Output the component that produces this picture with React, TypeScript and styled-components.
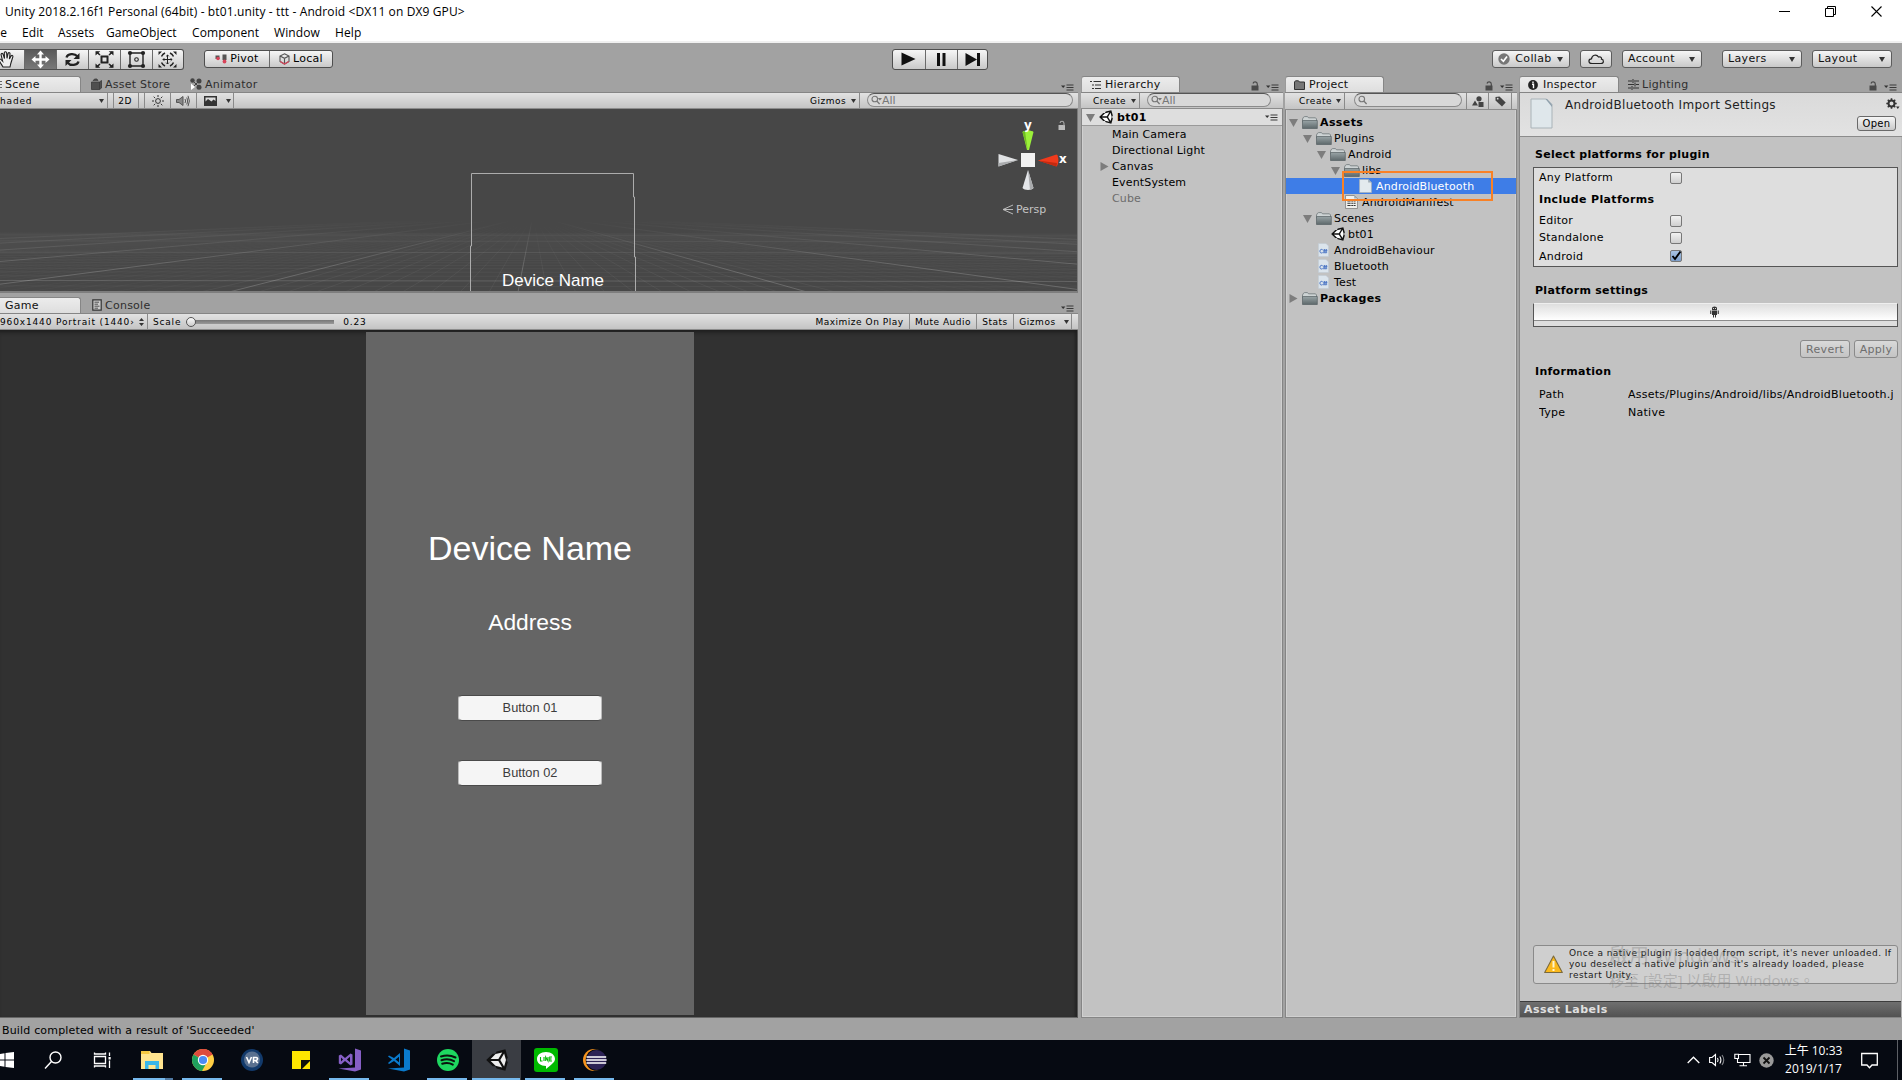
import React from "react";
import styled, { createGlobalStyle, css } from "styled-components";

const Global = createGlobalStyle`
  *{box-sizing:border-box}
  html,body{margin:0;padding:0;overflow:hidden;background:#a2a2a2}
  body{font-family:"DejaVu Sans","Noto Sans CJK TC",sans-serif;font-size:11px;color:#000}
  svg{display:block;flex:none}
`;

const Screen = styled.div`
  position: relative; width: 1902px; height: 1080px; overflow: hidden;
  display: flex; flex-direction: column; background: #a2a2a2;
`;
const winFont = css`font-family: "Open Sans", "Noto Sans CJK TC", sans-serif; font-size: 12px;`;

/* ---------- window chrome ---------- */
const TitleBar = styled.header`
  ${winFont} height: 24px; background: #fff; display: flex; align-items: center;
  padding: 0 20px 2px 5px; flex: none; letter-spacing: 0.12px; white-space: nowrap;
`;
const TitleText = styled.span`flex: 1;`;
const WindowButtons = styled.div`display: flex; gap: 35px; align-items: center;`;
const MenuBar = styled.nav`
  ${winFont} height: 19px; background: #fff; border-bottom: 2px solid #f0f0f0; display: flex;
  align-items: center; flex: none;
`;
const MenuItem = styled.span<{ $w: number }>`
  width: ${p => p.$w}px; flex: none; white-space: nowrap; line-height: 16px; letter-spacing: 0.1px;
`;
const MenuCut = styled(MenuItem)`display: flex; justify-content: flex-end; padding-right: 15px; overflow: hidden;`;

/* ---------- main toolbar ---------- */
const TopBar = styled.div`height: 33px; flex: none; display: flex; align-items: center; padding-bottom: 1px;`;
const btnFace = css`
  background: linear-gradient(#f6f6f6, #c9c9c9); border: 1px solid #4e4e4e; border-radius: 3px;
`;
const Group = styled.div<{ $h: number; $ml: number; $open?: boolean }>`
  ${btnFace} display: flex; height: ${p => p.$h}px; margin-left: ${p => p.$ml}px; overflow: hidden; flex: none;
  ${p => p.$open && "border-left:0;border-radius:0 3px 3px 0;"}
`;
const GroupButton = styled.button<{ $w: number; $on?: boolean; $pr?: number }>`
  all: unset; box-sizing: border-box; width: ${p => p.$w}px; display: flex; align-items: center; justify-content: center; gap: 3px;
  font-size: 11px; letter-spacing: 0.25px; line-height: 18px; padding-right: ${p => p.$pr ?? 0}px;
  background: ${p => (p.$on ? "linear-gradient(#5a5a5a,#787878)" : "transparent")};
  & + & { border-left: 1px solid #6a6a6a; }
`;
const Dropdown = styled.button<{ $w: number; $ml: number }>`
  ${btnFace} border-color: #5c5c5c; margin: 0 0 0 ${p => p.$ml}px; width: ${p => p.$w}px; height: 18px; padding: 0 6px 0 5px;
  font: 11px/16px "DejaVu Sans", sans-serif; letter-spacing: 0.35px; color: #111;
  display: flex; align-items: center; justify-content: space-between; flex: none;
`;

/* ---------- docks ---------- */
const Main = styled.main`height: 942px; flex: none; display: flex;`;
const Column = styled.section<{ $w: number; $ml?: number }>`
  width: ${p => p.$w}px; margin-left: ${p => p.$ml ?? 0}px; flex: none; display: flex; flex-direction: column;
`;
const TabStrip = styled.div<{ $mt?: number }>`
  height: 16px; margin-top: ${p => p.$mt ?? 0}px; display: flex; flex: none; align-items: stretch;
`;
const Tab = styled.div<{ $w: number; $on?: boolean; $pl?: number; $gap?: number }>`
  width: ${p => p.$w}px; padding-left: ${p => p.$pl ?? 9}px; display: flex; align-items: center; gap: ${p => p.$gap ?? 4}px;
  font-size: 11px; letter-spacing: 0.25px; white-space: nowrap; flex: none; color: ${p => (p.$on ? "#111" : "#2e2e2e")};
  ${p => p.$on && "background:linear-gradient(#ececec,#dedede);border:1px solid #868686;border-left-color:#9a9a9a;border-bottom:0;border-radius:3px 3px 0 0;"}
`;
const EdgeTab = styled(Tab)`border-left: 0; border-top-left-radius: 0;`;
const StripEnd = styled.div<{ $pr?: number }>`
  margin-left: auto; display: flex; align-items: flex-end; gap: 7px; padding: 0 ${p => p.$pr ?? 4}px 1px 0;
`;
const ToolStrip = styled.div<{ $pl?: number; $pr?: number; $h?: number }>`
  height: ${p => p.$h ?? 17}px; flex: none; display: flex; background: linear-gradient(#e2e2e2, #c4c4c4);
  border-top: 1px solid #858585; border-bottom: 1px solid #8c8c8c; padding: 0 ${p => p.$pr ?? 0}px 0 ${p => p.$pl ?? 0}px;
  font-size: 9px; letter-spacing: 0.52px; align-items: stretch; overflow: hidden;
`;
const ToolCell = styled.div<{ $w: number; $pl?: number; $nb?: boolean; $pr?: number }>`
  width: ${p => p.$w}px; flex: none; padding: 0 ${p => p.$pr ?? 3}px 0 ${p => p.$pl ?? 0}px; display: flex; align-items: center; justify-content: space-between;
  white-space: nowrap; overflow: hidden; ${p => !p.$nb && "border-right:1px solid #8a8a8a;"}
`;
const WideCell = styled(ToolCell)`letter-spacing: 0.85px;`;
const ScaleCell = styled(ToolCell)`letter-spacing: 0.8px; justify-content: flex-start;`;
const Centered = styled(ToolCell)`justify-content: center; padding: 0 ${p => p.$pr ?? 0}px 0 0;`;
const Spacer = styled.div`flex: 1;`;
const Search = styled.div<{ $w: number; $ml: number }>`
  width: ${p => p.$w}px; margin: 0 0 0 ${p => p.$ml}px; height: 14px; flex: none; border-radius: 7px;
  border: 1px solid #8b8b8b; border-top-color: #555; background: #d8d8d8; display: flex; align-items: center; padding-left: 3px; gap: 0;
  color: #777; font-size: 11px; line-height: 11px; letter-spacing: 0;
`;
const ScaleRail = styled.div`
  width: 150px; height: 9px; display: flex; align-items: center; margin: 0 7px 0 5px; flex: none;
  background: linear-gradient(#777, #999) center / 146px 4px no-repeat;
`;
const Knob = styled.i`width: 10px; height: 10px; flex: none; border-radius: 5px; border: 1px solid #555; background: linear-gradient(#fafafa, #ccc);`;

const SceneView = styled.div`
  position: relative; height: 184px; flex: none; background: #474747; border-right: 1px solid #7b7b7b; border-bottom: 2px solid #7e7e7e; overflow: hidden;
`;
const SceneSvg = styled.svg`position: absolute; left: 0; top: 0;`;
const Float = styled.span<{ $x: number; $y: number; $s: number; $c: string; $f?: string; $b?: boolean }>`
  position: absolute; left: ${p => p.$x}px; top: ${p => p.$y}px; font-size: ${p => p.$s}px; line-height: 1; color: ${p => p.$c};
  font-family: ${p => p.$f ?? '"DejaVu Sans", sans-serif'}; font-weight: ${p => (p.$b ? 700 : 400)}; white-space: nowrap;
`;
const GameView = styled.div`
  height: 688px; flex: none; background: #313131; box-shadow: inset 0 5px 4px -3px #1c1c1c, inset -3px 0 3px -1px #242424;
  border-right: 1px solid #555; border-bottom: 1px solid #666; padding: 2px 0 0 366px;
`;
const GameScreen = styled.div`
  width: 328px; height: 683px; background: #656565; display: flex; flex-direction: column; align-items: center;
  font-family: "Liberation Sans", Arial, sans-serif; color: #fff;
`;
const GameText = styled.div<{ $s: number; $mt: number }>`
  font-size: ${p => p.$s}px; line-height: 40px; margin-top: ${p => p.$mt}px; height: 40px; white-space: nowrap;
`;
const GameButton = styled.button<{ $mt: number }>`
  margin: ${p => p.$mt}px 0 0; width: 144px; height: 26px; border: 1px solid #bbb; border-top-color: #4a4a4a; border-bottom-color: #4a4a4a;
  border-radius: 4px; background: #f5f5f5; color: #3c3c3c; font: 12.8px/22px "Liberation Sans", Arial, sans-serif; padding: 0;
`;
const PanelBody = styled.div`
  flex: 1; min-height: 0; background: #c2c2c2; border: 1px solid #858585; border-top: 0;
  box-shadow: inset -1px -1px 0 #d0d0d0, inset 1px 0 0 #d0d0d0; display: flex; flex-direction: column;
`;

/* ---------- trees ---------- */
const SceneRow = styled.div`
  height: 17px; flex: none; background: #dedede; border-bottom: 1px solid #9a9a9a; display: flex; align-items: center; padding: 0 4px; gap: 4px;
  font-weight: 700; font-size: 11px; letter-spacing: 0.35px;
`;
const Row = styled.div<{ $pl: number; $sel?: boolean; $bold?: boolean; $dim?: boolean }>`
  height: 16px; flex: none; display: flex; align-items: center; padding-left: ${p => p.$pl}px; white-space: nowrap;
  background: ${p => (p.$sel ? "#3e7de7" : "transparent")}; color: ${p => (p.$sel ? "#fff" : p.$dim ? "#6c6c6c" : "#000")};
  font-weight: ${p => (p.$bold ? 700 : 400)}; font-size: 11px; letter-spacing: ${p => (p.$bold ? 0.4 : 0.15)}px;
`;
const Label = styled.span`padding-top: 1px; line-height: 15px;`;
const IconSlot = styled.span<{ $w: number }>`width: ${p => p.$w}px; flex: none; display: flex; align-items: center; justify-content: flex-start;`;
const Tree = styled.div`display: flex; flex-direction: column; padding-top: 4px;`;

/* ---------- inspector ---------- */
const InspHead = styled.div`
  height: 45px; flex: none; background: linear-gradient(#dadada, #e2e2e2); border-top: 1px solid #858585; border-bottom: 1px solid #8c8c8c;
  border-left: 1px solid #858585; display: flex; padding: 5px 2px 0 10px;
`;
const HeadTitle = styled.div`font-size: 12px; letter-spacing: 0.3px; color: #222; margin-left: 12px; line-height: 15px; flex: 1; white-space: nowrap;`;
const HeadTools = styled.div`display: flex; flex-direction: column; align-items: flex-end; justify-content: space-between; padding-bottom: 5px;`;
const SmallButton = styled.button<{ $w: number; $h: number; $off?: boolean; $mr?: number }>`
  ${btnFace} width: ${p => p.$w}px; height: ${p => p.$h}px; padding: 0; margin: 0 ${p => p.$mr ?? 0}px 0 0; font: ${p => (p.$off ? 11 : 10)}px/1 "DejaVu Sans", sans-serif; letter-spacing: 0.3px;
  border-color: ${p => (p.$off ? "#8a8a8a" : "#6a6a6a")}; color: ${p => (p.$off ? "#6e6e6e" : "#000")};
  ${p => p.$off && "background:linear-gradient(#d9d9d9,#c4c4c4);"}
`;
const InspBody = styled(PanelBody)`border-right: 1px solid #b2b2b2; box-shadow: none;`;
const Heading = styled.div<{ $mt: number }>`
  font-weight: 700; font-size: 11px; letter-spacing: 0.3px; line-height: 16px; height: 16px; margin: ${p => p.$mt}px 0 0 15px; white-space: nowrap; flex: none;
`;
const PlatformBox = styled.div`
  margin: 4px 3px 0 13px; height: 100px; flex: none; border: 1px solid #555; background: #dedede; padding: 1px 0 0 5px;
`;
const Field = styled.div<{ $h: number; $lw: number; $b?: boolean }>`
  height: ${p => p.$h}px; display: grid; grid-template-columns: ${p => p.$lw}px 1fr; align-items: center; white-space: nowrap;
  letter-spacing: ${p => (p.$b ? 0.35 : 0.26)}px; font-weight: ${p => (p.$b ? 700 : 400)};
`;
const Check = styled.i<{ $on?: boolean }>`
  width: 12px; height: 12px; border: 1px solid #777; border-radius: 2px; display: flex; align-items: center; justify-content: center;
  background: ${p => (p.$on ? "linear-gradient(#a9c3e2,#7e9fc9)" : "linear-gradient(#f2f2f2,#cfcfcf)")};
`;
const PlatformTab = styled.div`
  margin: 4px 3px 0 13px; height: 24px; flex: none; border: 1px solid #555; border-top-color: #eee; background: #dedede;
`;
const PlatformFace = styled.div`
  height: 17px; display: flex; align-items: center; justify-content: center; background: linear-gradient(#dedede, #fff); border-bottom: 1px solid #8c8c8c;
  padding-right: 2px;
`;
const Actions = styled.div`display: flex; justify-content: flex-end; gap: 4px; margin: 13px 3px 0 0;`;
const Info = styled.div`margin: 5px 8px 0 19px; overflow: hidden;`;
const Clip = styled.span`overflow: hidden; white-space: nowrap;`;
const Warning = styled.div`
  margin: auto 3px 17px 13px; height: 39px; flex: none; border: 1px solid #8a8a8a; border-radius: 3px; background: #cfcfcf;
  display: flex; align-items: center; padding-left: 10px; gap: 6px; font-size: 9px; line-height: 11px; letter-spacing: 0.45px; color: #1a1a1a; white-space: nowrap;
`;
const AssetLabels = styled.div`
  height: 16px; flex: none; background: linear-gradient(#6f6f6f, #525252); border-top: 1px solid #3c3c3c; color: #e0e0e0; font-weight: 700; font-size: 11px;
  line-height: 16px; padding-left: 4px; letter-spacing: 0.45px;
`;

/* ---------- status, taskbar ---------- */
const Status = styled.div`flex: 1; font-size: 11px; letter-spacing: 0.17px; padding: 6px 0 0 2px; line-height: 13px; white-space: nowrap;`;
const Taskbar = styled.footer`height: 40px; flex: none; background: #060a12; display: flex; color: #fff;`;
const Slot = styled.div<{ $w?: number; $on?: boolean; $run?: boolean; $split?: boolean }>`
  width: ${p => p.$w ?? 49}px; flex: none; display: flex; align-items: center; justify-content: center;
  background:
    ${p => (p.$split ? "linear-gradient(#507aa3,#507aa3) 39px 38px / 8px 2px no-repeat," : "")}
    ${p => (p.$run ? `linear-gradient(#76b9ed,#76b9ed) ${p.$on ? 0 : p.$split ? 7 : 4}px 38px / ${p.$on ? 48 : p.$split ? 32 : 40}px 2px no-repeat,` : "")}
    ${p => (p.$on ? "#3a3d43" : "transparent")};
`;
const Tray = styled.div`margin-left: auto; display: flex; align-items: center; padding-right: 4px;`;
const TraySlot = styled.div<{ $w: number }>`width: ${p => p.$w}px; flex: none; display: flex; justify-content: center;`;
const Clock = styled.div`
  font-family: "Open Sans", "Noto Sans CJK TC", sans-serif; font-size: 12px; line-height: 18px; width: 71px; text-align: center; white-space: nowrap;
`;
const DesktopEdge = styled.i`width: 1px; height: 40px; background: #5d6066; margin-left: 8px;`;
const Callout = styled.div`position: absolute; left: 1342px; top: 171px; width: 151px; height: 30px; border: 2px solid #f98125;`;

/* ---------- icons ---------- */
const Caret = ({ s = 5, c = "#333" }: { s?: number; c?: string }) => (
  <svg width={s} height={s - 1} viewBox="0 0 6 4" preserveAspectRatio="none"><path d="M0 0H6L3 4Z" fill={c} /></svg>
);
const PanelMenu = () => (
  <svg width="13" height="7" viewBox="0 0 13 7"><path d="M0 1.5H4.4L2.2 4Z" fill="#333" /><path d="M5.500 1H12.500M5.500 3.500H12.500M5.500 6H12.500" stroke="#3a3a3a" /></svg>
);
const Lock = () => (
  <svg width="8" height="10" viewBox="0 0 8 10"><path d="M.5 4.500H7.500V9.500H.5Z" fill="#4a4a4a" /><path d="M2 2.500C2.500.3 6.200.2 6.300 3V5" fill="none" stroke="#4a4a4a" strokeWidth="1.200" /></svg>
);
const Glass = ({ drop }: { drop?: boolean }) => (
  <svg width={drop ? 11 : 10} height="10" viewBox={drop ? "0 0 11 10" : "0 0 10 10"}>
    <circle cx="3.800" cy="4" r="2.800" fill="none" stroke="#777" strokeWidth="1.100" /><path d="M5.800 6L8.600 9" stroke="#777" strokeWidth="1.300" />
    {drop && <path d="M6.800 3H11L8.900 5.600Z" fill="#777" />}
  </svg>
);
const Fold = ({ open }: { open?: boolean }) => (
  <svg width="9" height="9" viewBox="0 0 9 9"><path d={open ? "M0 1H9L4.500 9Z" : "M.5 0L8.500 4.500L.5 9Z"} fill="#7d7d7d" /></svg>
);
const Folder = () => (
  <svg width="16" height="13" viewBox="0 0 16 13">
    <path d="M.5 3L1.500 1.200L2.500.6H5.500L6.500 1.800H13.500L14.500 3V6H.5Z" fill="#cdd3d4" stroke="#6d7678" strokeWidth=".8" />
    <path d="M.5 4.500H15.300V12.500H.5Z" fill="url(#fold)" stroke="#566063" strokeWidth=".7" />
  </svg>
);
const UnityMark = ({ s = 14, dark = "#111", light = "#fff" }: { s?: number; dark?: string; light?: string }) => (
  <svg width={s} height={s} viewBox="10 10 494 494">
    <path d="M498 206.400L445.300 14.700L248.200 66.100L219 116.100L159.800 115.700L15.500 256L159.800 396.300L219 395.900L248.200 445.900L445.300 497.300L498 305.600L468 256Z" fill={dark} />
    <path d="M223.800 124.200L374.500 86.500L288 232.300H114.900ZM223.800 387.800L374.500 425.500L288 279.700H114.900ZM330.300 256L416.800 110.200L458.300 256L416.800 401.800Z" fill={light} />
  </svg>
);
const Sheet = ({ lines, w = 12, h = 14 }: { lines?: boolean; w?: number; h?: number }) => (
  <svg width={w} height={h} viewBox="0 0 12 14" preserveAspectRatio="none">
    <path d="M.5.5H8.500L11.500 3.500V13.500H.5Z" fill={lines ? "#f1f1ee" : "#e3eaee"} stroke={lines ? "#777" : "#a8b2b8"} strokeWidth=".7" />
    <path d="M8.500.5V3.500H11.500Z" fill="#9fadb7" />
    {lines && <path d="M2.200 6H9.800M2.200 8.300H9.800M2.200 10.600H9.800" stroke="#333" strokeWidth="1" strokeDasharray="3 .6 1.6 .5" />}
  </svg>
);
const FileBig = () => (
  <svg width="23" height="31" viewBox="0 0 23 31">
    <path d="M1 1H16.500L22 6.500V30H1Z" fill="#dfe7eb" stroke="#a9b3b8" />
    <path d="M15.500 1H17L22 6.500V9Z" fill="#8fa0ac" />
  </svg>
);
const ScriptIcon = () => (
  <svg width="11" height="14" viewBox="0 0 11 14"><path d="M.4.4H8L10.600 3V13.600H.4Z" fill="#dbe4ec" stroke="#c0cad3" strokeWidth=".6" />
    <path d="M4.700 6.800C3.600 5.900 1.900 6.400 1.900 8.200S3.600 10.500 4.700 9.600M6.400 6L6 10.400M8.300 6L7.900 10.400M5.300 7.300H9.400M5.100 9.100H9.200" stroke="#4a74c4" strokeWidth="1" fill="none" /></svg>
);

const ToolIcon = ({ k }: { k: string }) => (
  <svg width="21" height="19" viewBox="0 0 21 19" fill="none" stroke="#222" strokeWidth="1.600">
    {k === "hand" && <path d="M5 17C3.500 14 1 11.500 .8 9.500C1.500 8.200 3 9.300 4.600 11L3 4.500C3.200 3 4.800 3 5.200 4.500L6.500 8.500L6.300 2.600C6.800 1.300 8.400 1.400 8.600 2.800L9 8.300L10.100 3.300C10.800 2 12.200 2.600 12 4L11.400 9L13.200 5.700C14.200 4.900 15.200 5.700 14.800 7L12.800 13.500L12 17Z" strokeWidth="1.100" fill="#eee" />}
    {k === "move" && <path d="M10.500 .5L14 4.500H11.700V8.300H15.500V6L19.500 9.500L15.500 13V10.700H11.700V14.500H14L10.500 18.500L7 14.500H9.300V10.700H5.500V13L1.500 9.500L5.500 6V8.300H9.300V4.500H7Z" fill="#fff" stroke="none" />}
    {k === "rotate" && <><path d="M4.500 7.500C5.500 3.500 12.500 2.800 15.300 6.300M16.500 11.500C15.500 15.500 8.500 16.200 5.700 12.700" strokeWidth="2.300" /><path d="M17.500 3V9H11.500ZM3.500 16V10H9.500Z" fill="#222" stroke="none" /></>}
    {k === "scale" && <><path d="M7.500 6.500H13.500V12.500H7.500Z" strokeWidth="2" /><path d="M6 5L2.500 1.900M15 5L18.500 1.900M6 14L2.500 17.100M15 14L18.500 17.100" /><path d="M1.500 1.300H6.300L1.500 5.500ZM19.500 1.300H14.700L19.500 5.500ZM1.500 17.700H6.300L1.500 13.500ZM19.500 17.700H14.700L19.500 13.500Z" fill="#222" stroke="none" /></>}
    {k === "rect" && <><path d="M4 3H17V16H4Z" strokeWidth="1.400" /><circle cx="10.500" cy="9.500" r="1.800" strokeWidth="1.100" />
      {[[4, 3], [17, 3], [4, 16], [17, 16]].map(([x, y]) => <circle key={`${x}-${y}`} cx={x} cy={y} r="2.100" fill="#222" stroke="none" />)}</>}
    {k === "multi" && <><path d="M4.500 6.500A7 7 0 0 1 8 3M13 3A7 7 0 0 1 16.500 6.500M16.500 12.500A7 7 0 0 1 13 16M8 16A7 7 0 0 1 4.500 12.500" strokeWidth="1.500" /><path d="M1.500 1.500H5L1.500 5ZM19.500 1.500H16L19.500 5ZM1.500 17.500H5L1.500 14ZM19.500 17.500H16L19.500 14Z" fill="#222" stroke="none" /><path d="M10.500 5V14M6 9.500H15M9.200 6.300L10.500 5L11.800 6.300M9.200 12.700L10.500 14L11.800 12.700M7.300 8.200L6 9.500L7.300 10.800M13.700 8.200L15 9.500L13.700 10.800" strokeWidth="1" /></>}
  </svg>
);

/* perspective floor: rays from the vanishing point plus rows at even depth */
const FloorGrid = () => {
  const rays = [];
  for (let i = -60; i <= 60; i++) {
    const x = 518 + i * 28.9;
    const major = i % 10 === 0;
    rays.push(<path key={i} d={`M533 106L${x} 183`} stroke="#fff" strokeOpacity={major ? 0.19 : Math.abs(i) < 12 ? 0.05 : 0.025} />);
  }
  const rows = [];
  for (let j = -2; j < 36; j++) {
    const y = 106 + 1 / (0.01527 + j * 0.00117);
    rows.push(<path key={j} d={`M0 ${y}L1077 ${y + 1}`} stroke="#fff" strokeOpacity={j % 10 === 0 ? 0.15 : 0.045} />);
  }
  return <g mask="url(#haze)">{rays}{rows}</g>;
};

const Scene = () => (
  <SceneView>
    <SceneSvg width="1077" height="182" viewBox="0 0 1077 182">
      <defs>
        <linearGradient id="hz" x1="0" y1="0" x2="0" y2="182" gradientUnits="userSpaceOnUse">
          <stop offset=".61" stopColor="#000" /><stop offset=".72" stopColor="#666" /><stop offset=".88" stopColor="#fff" />
        </linearGradient>
        <mask id="haze" maskUnits="userSpaceOnUse" x="0" y="0" width="1077" height="182"><rect width="1077" height="182" fill="url(#hz)" /></mask>
        <linearGradient id="fold" x1="0" y1="0" x2="0" y2="1"><stop stopColor="#99a4a6" /><stop offset="1" stopColor="#5d686b" /></linearGradient>
      </defs>
      <FloorGrid />
      <path d="M470.500 182V137H471.500V64.500H633.500V88H634.500V148H635.500V182" fill="none" stroke="#acacac" />
      <path d="M1022.500 23C1024 21 1032 21 1033.500 23L1029 41H1027Z" fill="#9bf03a" />
      <path d="M1027.600 41L1022.500 23L1025 22Z" fill="#6fbd22" />
      <path d="M1038 51.500L1056.500 45.500C1059 47 1059 55.500 1056.500 57.500Z" fill="#f03a1c" />
      <path d="M1038 51.500L1056.500 57.500L1057 54Z" fill="#c42a10" />
      <path d="M1018 51L998.500 45V57.500Z" fill="#e0e2e4" /><path d="M1018 51L998.500 57.500V54Z" fill="#a9abad" />
      <path d="M1028 61L1022.500 79C1024 81.500 1032 81.500 1033.500 79Z" fill="#e4e6e9" /><path d="M1028 61L1033.500 79L1030 81Z" fill="#a9abad" />
      <path d="M1021 44H1035V58H1021Z" fill="#f2f2f2" />
      <path d="M1058.500 16H1065V21H1058.500Z" fill="#bbb" /><path d="M1060 14C1060.500 11.500 1064 11.500 1064 14.500V17" fill="none" stroke="#aaa" strokeWidth="1.100" />
      <path d="M1013 96L1003 100.500L1013 105M1003 100.500H1013" fill="none" stroke="#bcbcbc" />
    </SceneSvg>
    <Float $x={502} $y={163} $s={17} $c="#fff" $f={'"Liberation Sans", Arial, sans-serif'}>Device Name</Float>
    <Float $x={1024} $y={10} $s={12} $c="#fff" $b>y</Float>
    <Float $x={1059} $y={44} $s={12} $c="#fff" $b>x</Float>
    <Float $x={1016} $y={95} $s={11} $c="#c4c4c4">Persp</Float>
  </SceneView>
);

const treeRows: { d: number; k: string; t: string; fold?: boolean; open?: boolean; bold?: boolean; sel?: boolean }[] = [
  { d: 0, k: "folder", t: "Assets", fold: true, open: true, bold: true },
  { d: 1, k: "folder", t: "Plugins", fold: true, open: true },
  { d: 2, k: "folder", t: "Android", fold: true, open: true },
  { d: 3, k: "folder", t: "libs", fold: true, open: true },
  { d: 4, k: "file", t: "AndroidBluetooth", sel: true },
  { d: 3, k: "text", t: "AndroidManifest" },
  { d: 1, k: "folder", t: "Scenes", fold: true, open: true },
  { d: 2, k: "unity", t: "bt01" },
  { d: 1, k: "cs", t: "AndroidBehaviour" },
  { d: 1, k: "cs", t: "Bluetooth" },
  { d: 1, k: "cs", t: "Test" },
  { d: 0, k: "folder", t: "Packages", fold: true, bold: true },
];
const treeIcon = (k: string) =>
  k === "folder" ? <Folder /> : k === "file" ? <Sheet w={13} /> : k === "text" ? <Sheet lines w={13} /> : k === "unity" ? <UnityMark /> : <ScriptIcon />;

const TaskIcon = ({ k }: { k: string }) => (
  <svg width="24" height="24" viewBox="0 0 24 24">
    {k === "search" && <g fill="none" stroke="#fff" strokeWidth="1.400"><circle cx="14.500" cy="9.500" r="5.500" /><path d="M10.500 13.500L4 20.500" /></g>}
    {k === "view" && <g fill="none" stroke="#fff" strokeWidth="1.300"><path d="M4.500 8.500H15.500V15.500H4.500ZM4.500 4.500V6H15.500V4.500M4.500 19.500V18H15.500V19.500M19.500 4.500V8M19.500 12.500V20" /><path d="M18.500 9H20.700V11.500H18.500Z" fill="#fff" stroke="none" /></g>}
    {k === "explorer" && <><path d="M1 3H10L11.500 5H23V21H1Z" fill="#ffe48f" /><path d="M1 3H9.500V6H1Z" fill="#f5c842" /><path d="M5 13H19V21H15.500V17H8.500V21H5Z" fill="#3ab6e8" /></>}
    {k === "chrome" && <><circle cx="12" cy="12" r="11" fill="#ffce44" /><path d="M12 12L2.500 6.500A11 11 0 0 1 21.500 6.500Z" fill="#dd4b3e" /><path d="M12 12L2.500 6.500A11 11 0 0 0 11 23L16 14Z" fill="#1fa15d" /><path d="M12 7H21.700A11 11 0 0 0 12 1Z" fill="#dd4b3e" /><circle cx="12" cy="12" r="5.200" fill="#fff" /><circle cx="12" cy="12" r="4.100" fill="#4c8bf5" /></>}
    {k === "vr" && <><circle cx="12" cy="12" r="11" fill="#123a6b" /><circle cx="12" cy="11.500" r="8" fill="#5a7190" /><path d="M6.500 9L9 14.500L11.500 9M13.500 15V9.500H16Q17.800 9.800 17.500 11.200T15.500 12.500H13.500M15.500 12.500L17.800 15" stroke="#fff" strokeWidth="1.600" fill="none" /></>}
    {k === "note" && <><path d="M3 3H21V12H12V21H3Z" fill="#ffe500" /><path d="M12 12H21L12 21Z" fill="#10110a" /><path d="M21 13V21H13Z" fill="#ffe500" /></>}
    {k === "vs" && <path d="M17 .5L23 2.500V21.500L17 23.500L.5 20.500L17 19.500ZM.8 7.500L3 6.500L7 10L12.500 5.500L14.500 6.500V16.500L12.500 17.500L7 13L3 16.500L.8 15.500ZM3 9.500V13.500L5 11.500ZM8.800 11.500L12 14.300V8.700Z" fillRule="evenodd" fill="#865fc5" />}
    {k === "code" && <path d="M17 .5L23 2.500V21.500L17 23.500L1 20.500L17 19.500ZM2 7.500L7 10L13 5V18L7 13L2 16L1 15L5 11.500L1 8.500ZM8.500 11.500L12 14.300V8.700Z" fillRule="evenodd" fill="#0a7acc" />}
    {k === "spotify" && <><circle cx="12" cy="12" r="11" fill="#1ed760" /><path d="M5 8.500Q12.500 6 19.500 9.500M5.500 12.200Q12.300 10 18 13.200M6.200 15.800Q12 14 16.800 16.600" stroke="#0a120d" strokeWidth="2" fill="none" strokeLinecap="round" /></>}
    {k === "line" && <><rect width="24" height="24" rx="3" fill="#00b900" /><path d="M12 4C17.500 4 21 7.300 21 11S16 17.500 12 21V18C6.500 18 3 15 3 11S6.500 4 12 4Z" fill="#fff" /><path d="M6.500 9V13H8.500M10 9V13M11.700 13V9L14 13V9M18 9H15.700V13H18M15.700 11H17.700" stroke="#00b900" strokeWidth="1.100" fill="none" /></>}
    {k === "eclipse" && <><circle cx="11" cy="12" r="11" fill="#f7941e" /><circle cx="13.500" cy="12" r="10.800" fill="#060a12" /><circle cx="13.500" cy="12" r="10" fill="#2c2255" /><path d="M3.500 8.900H23.200M3.300 12H23.600M3.500 15.100H23.200" stroke="#fff" strokeWidth="1.500" /></>}
  </svg>
);
const tasks: [string, boolean][] = [["chrome", true], ["vr", false], ["note", false], ["vs", true], ["code", false], ["spotify", true]];

export default function App() {
  return (
    <Screen>
      <Global />
      <TitleBar>
        <TitleText>Unity 2018.2.16f1 Personal (64bit) - bt01.unity - ttt - Android &lt;DX11 on DX9 GPU&gt;</TitleText>
        <WindowButtons>
          <svg width="11" height="11" viewBox="0 0 11 11"><path d="M0 5.500H11" stroke="#000" /></svg>
          <svg width="11" height="11" viewBox="0 0 11 11" fill="none" stroke="#000"><path d="M.5 2.500H8.500V10.500H.5ZM2.500 2V.5H10.500V8.500H9" /></svg>
          <svg width="11" height="11" viewBox="0 0 11 11"><path d="M.5.5L10.500 10.500M10.500.5L.5 10.500" stroke="#000" strokeWidth="1.100" /></svg>
        </WindowButtons>
      </TitleBar>
      <MenuBar>
        <MenuCut $w={22}>File</MenuCut><MenuItem $w={36}>Edit</MenuItem><MenuItem $w={48}>Assets</MenuItem>
        <MenuItem $w={86}>GameObject</MenuItem><MenuItem $w={82}>Component</MenuItem><MenuItem $w={61}>Window</MenuItem><MenuItem $w={40}>Help</MenuItem>
      </MenuBar>
      <TopBar>
        <Group $h={21} $ml={0} $open>
          {["hand", "move", "rotate", "scale", "rect", "multi"].map((k, i) => (
            <GroupButton key={k} $w={i === 0 ? 24 : i === 5 ? 31 : 32} $pr={i === 0 ? 7 : 1} $on={k === "move"}><ToolIcon k={k} /></GroupButton>
          ))}
        </Group>
        <Group $h={18} $ml={20}>
          <GroupButton $w={64}>
            <svg width="12" height="10" viewBox="0 0 12 10"><path d="M.5 1.500H4.500V5H.5ZM7.500.5H11.500V6H7.500Z" fill="#555" /><circle cx="3" cy="4.500" r="1.800" fill="#d8445a" /><circle cx="9.500" cy="7.500" r="1.900" fill="#d8445a" /></svg>Pivot
          </GroupButton>
          <GroupButton $w={63}>
            <svg width="11" height="12" viewBox="0 0 11 12" fill="none" stroke="#555" strokeWidth="1.100"><path d="M5.500.8L10 3V8.500L5.500 11L1 8.500V3ZM1 3L5.500 5.300L10 3M5.500 5.300V11" /><path d="M1.200 8.500L5.500 11L9.800 8.500" stroke="#d8445a" /></svg>Local
          </GroupButton>
        </Group>
        <Group $h={21} $ml={559}>
          <GroupButton $w={32} $pr={2}><svg width="15" height="14" viewBox="0 0 15 14"><path d="M.5.5L14.500 7L.5 13.500Z" fill="#111" /></svg></GroupButton>
          <GroupButton $w={32} $pr={2}><svg width="10" height="13" viewBox="0 0 10 13"><path d="M1 0H4V13H1ZM6.500 0H9.500V13H6.500Z" fill="#111" /></svg></GroupButton>
          <GroupButton $w={30}><svg width="16" height="13" viewBox="0 0 16 13"><path d="M.5 0L12 6.500L.5 13ZM12 0H15V13H12Z" fill="#111" /></svg></GroupButton>
        </Group>
        <Dropdown $w={78} $ml={504}>
          <svg width="12" height="12" viewBox="0 0 12 12"><circle cx="6" cy="6" r="5.700" fill="#777" /><path d="M3 6L5.400 8.300L9 3.600" stroke="#fff" strokeWidth="1.700" fill="none" /></svg>Collab<Caret s={6} />
        </Dropdown>
        <Dropdown $w={32} $ml={10}>
          <svg width="20" height="12" viewBox="0 0 20 12"><path d="M6 10.500C2 10.500 2 6 5.500 5.800C6 2 10.500.8 12.500 4C15 3.200 15.800 5 15.500 6.200C18.200 6.800 18 10.500 15 10.500Z" fill="none" stroke="#222" strokeWidth="1.200" /></svg>
        </Dropdown>
        <Dropdown $w={80} $ml={10}>Account<Caret s={6} /></Dropdown>
        <Dropdown $w={80} $ml={20}>Layers<Caret s={6} /></Dropdown>
        <Dropdown $w={80} $ml={10}>Layout<Caret s={6} /></Dropdown>
      </TopBar>

      <Main>
        <Column $w={1078}>
          <TabStrip>
            <EdgeTab $w={81} $on $pl={0} $gap={3}><svg width="2" height="9" viewBox="0 0 2 9"><path d="M0 1.500H2M0 4.500H2M0 7.500H2" stroke="#666" /></svg>Scene</EdgeTab>
            <Tab $w={98} $pl={10} $gap={3}>
              <svg width="11" height="12" viewBox="0 0 11 12"><path d="M.5 4H8.500V11.500H.5ZM2 3L3.500 1H6L7 3M8.500 4L10.500 2.500V10L8.500 11.500" fill="#4f4f4f" stroke="#3a3a3a" strokeWidth=".8" /></svg>Asset Store
            </Tab>
            <Tab $w={90} $pl={11} $gap={3}>
              <svg width="12" height="12" viewBox="0 0 12 12"><circle cx="2.500" cy="2.500" r="2.200" fill="#444" /><circle cx="9" cy="3" r="2.500" fill="#444" /><circle cx="9" cy="9.300" r="2.500" fill="#444" /><path d="M2.500 2.500L9 9M9 3L3 9" stroke="#444" /><path d="M1 5.500L5 9L1 12Z" fill="#fff" /></svg>Animator
            </Tab>
            <StripEnd><PanelMenu /></StripEnd>
          </TabStrip>
          <ToolStrip $pr={5}>
            <WideCell $w={108}>haded<Caret /></WideCell><Centered $w={6} /><Centered $w={25} $pr={2}>2D</Centered><Centered $w={6} />
            <Centered $w={26}><svg width="12" height="12" viewBox="0 0 12 12" fill="none" stroke="#333"><circle cx="6" cy="6" r="2.400" /><path d="M6 0V2M6 10V12M0 6H2M10 6H12M1.700 1.700L3.200 3.200M8.800 8.800L10.300 10.300M10.300 1.700L8.800 3.200M3.200 8.800L1.700 10.300" /></svg></Centered>
            <Centered $w={26} $pr={1}><svg width="14" height="12" viewBox="0 0 14 12" fill="none" stroke="#555"><path d="M.5 4.500H3L7 1.500V10.500L3 7.500H.5Z" fill="#888" /><path d="M9 4Q10.200 6 9 8M10.800 2.500Q12.600 6 10.800 9.500M12 .8Q14.800 6 12 11.200" /></svg></Centered>
            <Centered $w={26} $nb><svg width="13" height="10" viewBox="0 0 13 10"><path d="M0 0H13V10H0Z" fill="#333" /><path d="M1.500 1.500H11.500V5L9.500 3.500L7.500 5.500L4 3L1.500 5.500Z" fill="#ddd" /></svg></Centered>
            <Centered $w={11}><Caret /></Centered>
            <Spacer />
            <ToolCell $w={56} $pl={6}>Gizmos<Caret /></ToolCell>
            <Search $w={206} $ml={7}><Glass drop />All</Search>
          </ToolStrip>
          <Scene />
          <TabStrip $mt={4}>
            <EdgeTab $w={81} $on $pl={5}>Game</EdgeTab>
            <Tab $w={90} $pl={11} $gap={3}>
              <svg width="10" height="12" viewBox="0 0 10 12"><path d="M.8.8H9.200V11.200H.8Z" fill="#ccc" stroke="#333" strokeWidth="1.200" /><path d="M2.500 3.200H7M2.500 5.200H6M2.500 7.200H7.500M2.500 9.200H6" stroke="#333" strokeWidth=".8" /></svg>Console
            </Tab>
            <StripEnd><PanelMenu /></StripEnd>
          </TabStrip>
          <ToolStrip>
            <WideCell $w={148}>960x1440 Portrait (1440›<svg width="5" height="8" viewBox="0 0 5 8"><path d="M0 3L2.500 0L5 3ZM0 5L2.500 8L5 5Z" fill="#333" /></svg></WideCell>
            <ScaleCell $w={230} $pl={5} $nb>Scale<ScaleRail><Knob /></ScaleRail>0.23</ScaleCell>
            <Spacer />
            <Centered $w={100}>Maximize On Play</Centered><Centered $w={67}>Mute Audio</Centered><Centered $w={37}>Stats</Centered>
            <Centered $w={47} $nb>Gizmos</Centered><Centered $w={11}><Caret /></Centered><Centered $w={6} $nb />
          </ToolStrip>
          <GameView>
            <GameScreen>
              <GameText $s={34} $mt={196}>Device Name</GameText>
              <GameText $s={22.8} $mt={34}>Address</GameText>
              <GameButton $mt={53}>Button 01</GameButton>
              <GameButton $mt={39}>Button 02</GameButton>
            </GameScreen>
          </GameView>
        </Column>

        <Column $w={202} $ml={3}>
          <TabStrip>
            <Tab $w={99} $on $pl={8}><svg width="11" height="10" viewBox="0 0 11 10"><path d="M0 1.500H2M3.500 1.500H11M2 5H4M5 5H11M2 8.500H4M5 8.500H11" stroke="#333" strokeWidth="1.100" /></svg>Hierarchy</Tab>
            <StripEnd><Lock /><PanelMenu /></StripEnd>
          </TabStrip>
          <ToolStrip $pl={6}>
            <ToolCell $w={53} $pl={6}>Create<Caret /></ToolCell><Search $w={124} $ml={7}><Glass drop />All</Search>
          </ToolStrip>
          <PanelBody>
            <SceneRow><Fold open /><UnityMark />bt01<Spacer /><PanelMenu /></SceneRow>
            <Row $pl={30}><Label>Main Camera</Label></Row>
            <Row $pl={30}><Label>Directional Light</Label></Row>
            <Row $pl={18}><IconSlot $w={12}><Fold /></IconSlot><Label>Canvas</Label></Row>
            <Row $pl={30}><Label>EventSystem</Label></Row>
            <Row $pl={30} $dim><Label>Cube</Label></Row>
          </PanelBody>
        </Column>

        <Column $w={232} $ml={2}>
          <TabStrip>
            <Tab $w={99} $on $pl={8}><svg width="11" height="10" viewBox="0 0 11 10"><path d="M.5 2L1.500.8H4.500L5.500 2H10.500V9.500H.5Z" fill="#777" stroke="#333" /></svg>Project</Tab>
            <StripEnd><Lock /><PanelMenu /></StripEnd>
          </TabStrip>
          <ToolStrip $pl={7} $h={18}>
            <ToolCell $w={53} $pl={7}>Create<Caret /></ToolCell><Search $w={108} $ml={9}><Glass /></Search><Centered $w={5} />
            <Centered $w={22}><svg width="12" height="11" viewBox="0 0 12 11"><circle cx="7" cy="2.800" r="2.600" fill="#444" /><path d="M0 9.500L3 4.500L6 9.500ZM6.500 6H11.500V11H6.500Z" fill="#444" /></svg></Centered>
            <Centered $w={23}><svg width="11" height="11" viewBox="0 0 11 11"><path d="M.5 1L4.500.5L10.700 6.500L7 10.500L.5 4.500Z" fill="#444" /><circle cx="2.700" cy="2.700" r=".9" fill="#ddd" /></svg></Centered>
          </ToolStrip>
          <PanelBody>
            <Tree>
              {treeRows.map(r => (
                <Row key={r.t + r.d} $pl={3 + r.d * 14} $sel={r.sel} $bold={r.bold}>
                  <IconSlot $w={r.k === "cs" ? 15 : r.k === "folder" ? 13 : 14}>{r.fold && <Fold open={r.open} />}</IconSlot>
                  <IconSlot $w={r.k === "cs" ? 16 : r.k === "folder" ? 18 : 17}>{treeIcon(r.k)}</IconSlot>
                  <Label>{r.t}</Label>
                </Row>
              ))}
            </Tree>
          </PanelBody>
        </Column>

        <Column $w={383} $ml={2}>
          <TabStrip>
            <Tab $w={100} $on $pl={8} $gap={5}>
              <svg width="10" height="10" viewBox="0 0 10 10"><circle cx="5" cy="5" r="4.900" fill="#222" /><path d="M4 4.200H5.500V8.200M5 1.500V3" stroke="#fff" strokeWidth="1.400" fill="none" /></svg>Inspector
            </Tab>
            <Tab $w={90} $pl={9} $gap={3}>
              <svg width="11" height="11" viewBox="0 0 11 11"><path d="M0 2H4M6 2H11M0 5.500H6M8 5.500H11M0 9H3M5 9H11M5 0V4M7 3.500V7.500M4 7V11" stroke="#333" /></svg>Lighting
            </Tab>
            <StripEnd $pr={5}><Lock /><PanelMenu /></StripEnd>
          </TabStrip>
          <InspHead>
            <FileBig />
            <HeadTitle>AndroidBluetooth Import Settings</HeadTitle>
            <HeadTools>
              <svg width="14" height="12" viewBox="0 0 14 12"><circle cx="5.500" cy="5.500" r="3" fill="none" stroke="#333" strokeWidth="2" /><path d="M5.500.3V2.200M5.500 8.800V10.700M.3 5.500H2.200M8.800 5.500H10.700M1.800 1.800L3.200 3.200M7.800 7.800L9.200 9.200M9.200 1.800L7.800 3.200M1.800 9.200L3.200 7.800" stroke="#333" strokeWidth="1.600" /><path d="M10 8.500H13.500L11.800 11Z" fill="#333" /></svg>
              <SmallButton $w={39} $h={15} $mr={4}>Open</SmallButton>
            </HeadTools>
          </InspHead>
          <InspBody>
            <Heading $mt={10}>Select platforms for plugin</Heading>
            <PlatformBox>
              <Field $h={17} $lw={131}><span>Any Platform</span><Check /></Field>
              <Field $h={27} $lw={131} $b><span>Include Platforms</span></Field>
              <Field $h={15} $lw={131}><span>Editor</span><Check /></Field>
              <Field $h={19} $lw={131}><span>Standalone</span><Check /></Field>
              <Field $h={18} $lw={131}><span>Android</span><Check $on><svg width="12" height="12" viewBox="0 0 12 12"><path d="M2.500 6L5 9L10.500 1.500" stroke="#000" strokeWidth="1.900" fill="none" /></svg></Check></Field>
            </PlatformBox>
            <Heading $mt={16}>Platform settings</Heading>
            <PlatformTab>
              <PlatformFace>
                <svg width="9" height="12" viewBox="0 0 9 12"><path d="M2 4V2Q2 .5 4.500.5T7 2V4ZM2 4.500H7V9H2ZM.2 4.500H1.300V8H.2ZM7.700 4.500H8.800V8H7.700ZM3 9H4V11.500H3ZM5 9H6V11.500H5Z" fill="#333" /><path d="M3 2.500H3.800M5.200 2.500H6" stroke="#fff" /></svg>
              </PlatformFace>
            </PlatformTab>
            <Actions><SmallButton $w={50} $h={18} $off>Revert</SmallButton><SmallButton $w={44} $h={18} $off>Apply</SmallButton></Actions>
            <Heading $mt={6}>Information</Heading>
            <Info>
              <Field $h={18} $lw={89}><span>Path</span><Clip>Assets/Plugins/Android/libs/AndroidBluetooth.jar</Clip></Field>
              <Field $h={18} $lw={89}><span>Type</span><span>Native</span></Field>
            </Info>
            <Warning>
              <svg width="19" height="19" viewBox="0 0 19 19"><path d="M9.500 1L18.300 17.500H.7Z" fill="#fbb91c" stroke="#7c6a3c" strokeWidth="1.100" strokeLinejoin="round" /><path d="M9.500 6V12.500M9.500 14V16" stroke="#fff6cf" strokeWidth="2" /></svg>
              <div>Once a native plugin is loaded from script, it's never unloaded. If<br />you deselect a native plugin and it's already loaded, please<br />restart Unity.</div>
            </Warning>
            <AssetLabels>Asset Labels</AssetLabels>
          </InspBody>
        </Column>
      </Main>

      <Status>Build completed with a result of 'Succeeded'</Status>

      <Taskbar>
        <Slot $w={28}><svg width="28" height="16" viewBox="0 0 28 16"><path d="M0 2L4.500 1.300V7.500H0ZM5.500 1.100L14 0V7.500H5.500ZM0 8.500H4.500V14.700L0 14ZM5.500 8.500H14V16L5.500 14.900Z" fill="#fff" /></svg></Slot>
        <Slot><TaskIcon k="search" /></Slot>
        <Slot $w={49}><TaskIcon k="view" /></Slot>
        <Slot $w={52} $run $split><TaskIcon k="explorer" /></Slot>
        {tasks.map(([k, run]) => <Slot key={k} $run={run}><TaskIcon k={k} /></Slot>)}
        <Slot $on $run><UnityMark s={22} dark="#111" light="#eee" /></Slot>
        <Slot $run><TaskIcon k="line" /></Slot>
        <Slot $run><TaskIcon k="eclipse" /></Slot>
        <Tray>
          <TraySlot $w={22}><svg width="13" height="8" viewBox="0 0 13 8"><path d="M.7 7L6.500 1.200L12.300 7" fill="none" stroke="#fff" strokeWidth="1.300" /></svg></TraySlot>
          <TraySlot $w={26}><svg width="17" height="14" viewBox="0 0 17 14" fill="none" stroke="#fff" strokeWidth="1.100"><path d="M.6 4.500H3L6.500 1.500V12.500L3 9.500H.6Z" /><path d="M8.500 5Q9.700 7 8.500 9M10.800 3.500Q13 7 10.800 10.500" /><path d="M13 2Q16.500 7 13 12" opacity=".5" /></svg></TraySlot>
          <TraySlot $w={24}><svg width="17" height="14" viewBox="0 0 17 14" fill="none" stroke="#fff" strokeWidth="1.100"><path d="M5 1.500H16V9.500H3.500V6M9.500 9.500V12.500M5.500 12.700H13M.8 1.200H4.500V5.500H.8Z" /></svg></TraySlot>
          <TraySlot $w={24}><svg width="15" height="15" viewBox="0 0 15 15"><circle cx="7.500" cy="7.500" r="7.200" fill="#999" /><path d="M4.500 4.500L10.500 10.500M10.500 4.500L4.500 10.500" stroke="#111" strokeWidth="1.800" /></svg></TraySlot>
          <Clock>上午 10:33<br />2019/1/17</Clock>
          <TraySlot $w={40}><svg width="17" height="17" viewBox="0 0 17 17"><path d="M.7 1.500H16.300V13H11L8.500 15.800L6 13H.7Z" fill="none" stroke="#fff" strokeWidth="1.300" /></svg></TraySlot>
          <DesktopEdge />
        </Tray>
      </Taskbar>

      <Callout />
      <Float $x={1609} $y={946} $s={20} $c="rgba(125,125,125,.36)" $f={'"Open Sans","Noto Sans CJK TC",sans-serif'}>啟用 Windows</Float>
      <Float $x={1609} $y={973} $s={15} $c="rgba(125,125,125,.4)" $f={'"Open Sans","Noto Sans CJK TC",sans-serif'}>移至 [設定] 以啟用 Windows。</Float>
    </Screen>
  );
}
